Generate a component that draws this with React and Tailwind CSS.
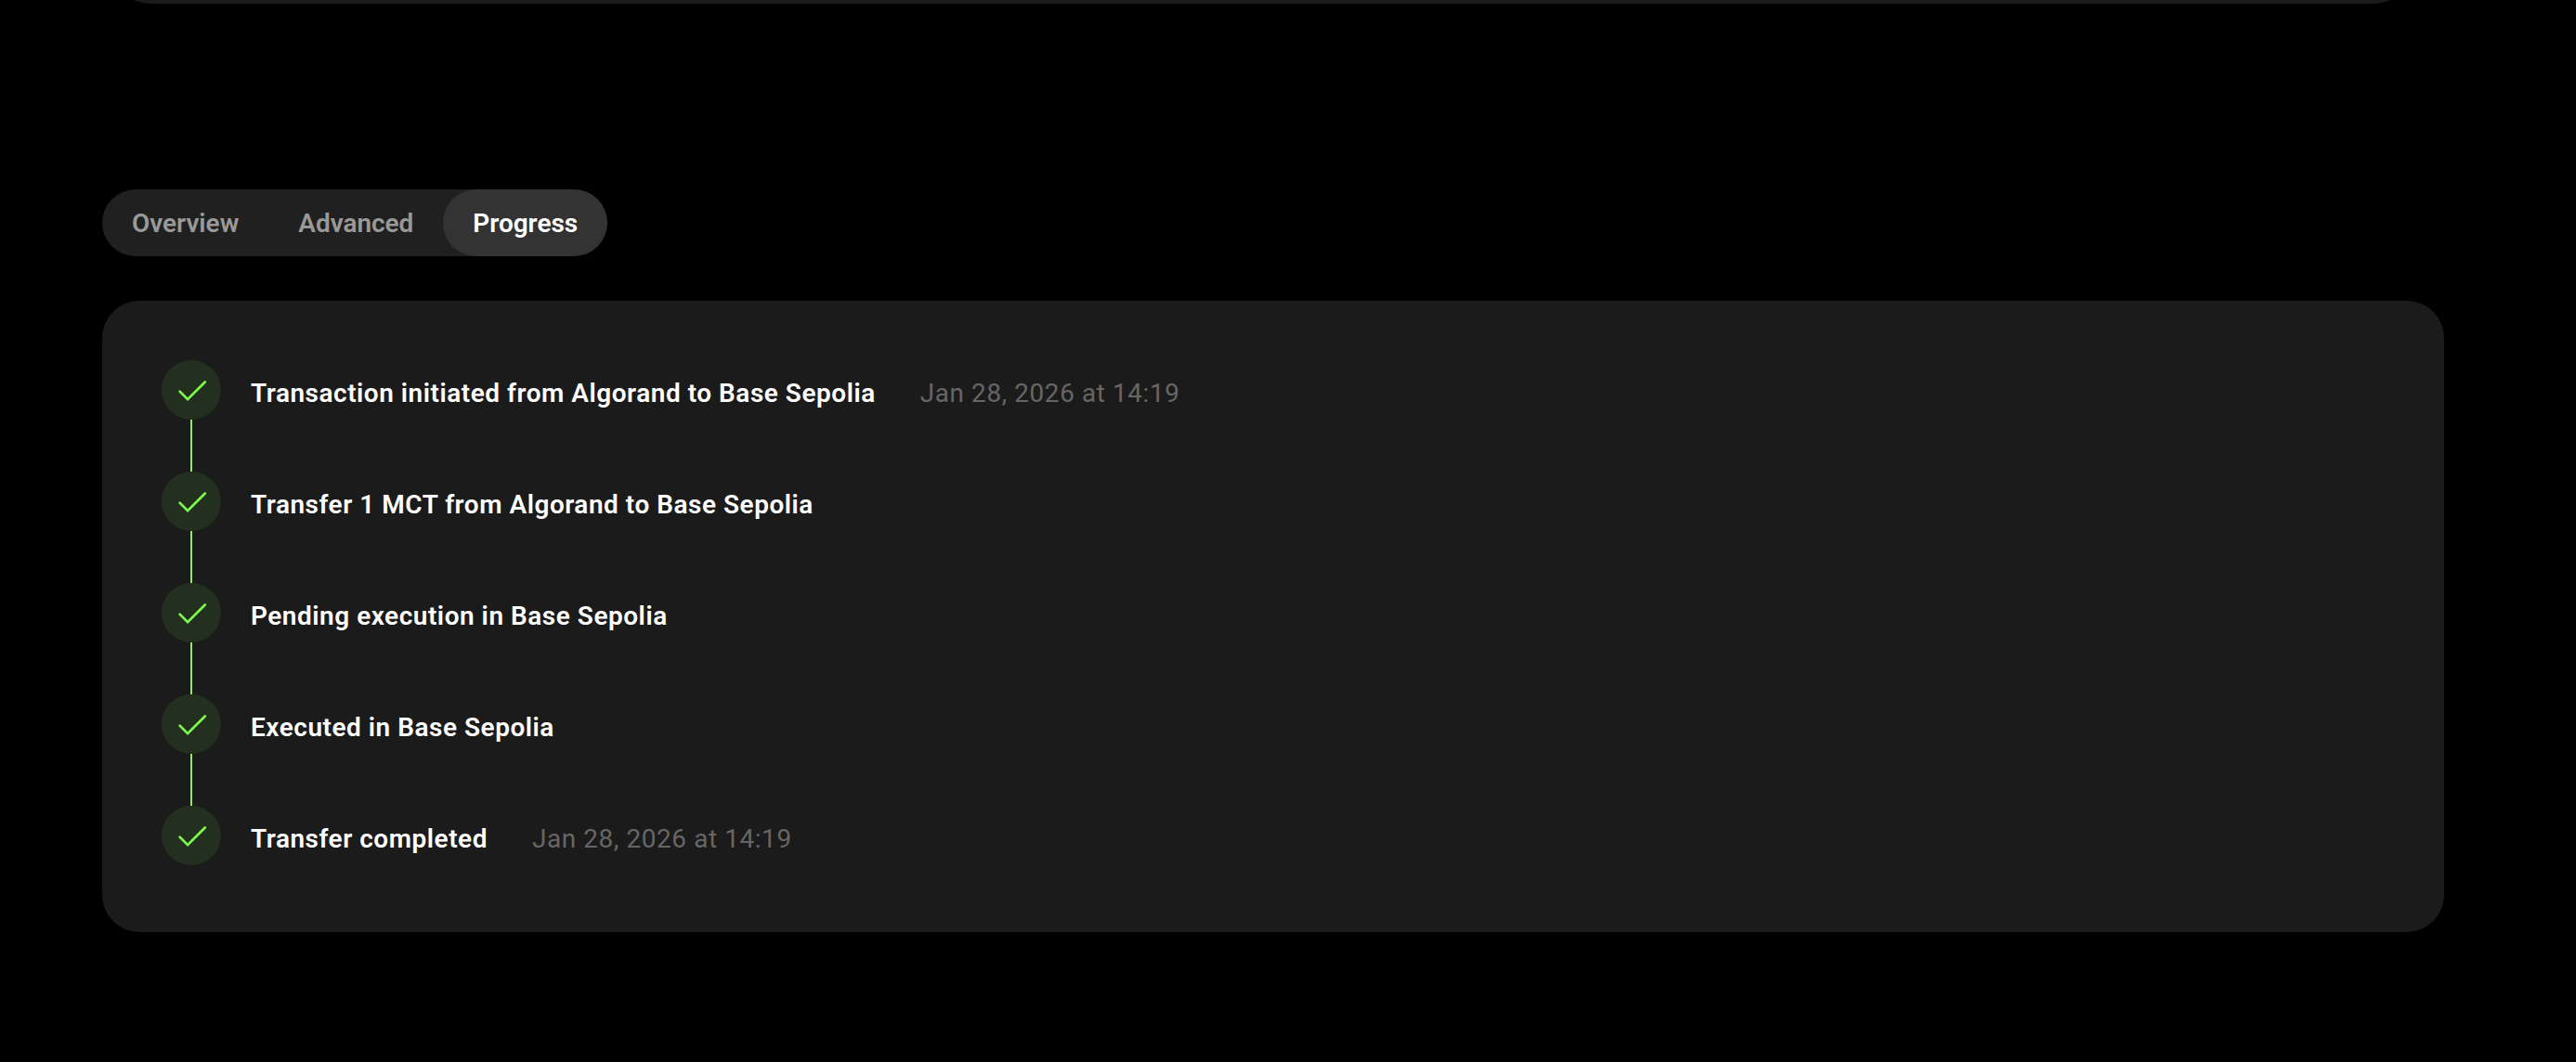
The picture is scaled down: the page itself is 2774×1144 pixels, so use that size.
const tabs = ["Overview", "Advanced", "Progress"];

const steps = [
  { label: "Transaction initiated from Algorand to Base Sepolia", date: "Jan 28, 2026 at 14:19" },
  { label: "Transfer 1 MCT from Algorand to Base Sepolia" },
  { label: "Pending execution in Base Sepolia" },
  { label: "Executed in Base Sepolia" },
  { label: "Transfer completed", date: "Jan 28, 2026 at 14:19" },
];

function CheckIcon() {
  return (
    <svg viewBox="0 0 64 64" className="size-16" fill="none" stroke="#7ffb4b" strokeWidth="2.7" strokeLinecap="round" strokeLinejoin="miter">
      <path d="M19.6 33.6 L28.1 42.2 L46.8 23.5" />
    </svg>
  );
}

function Tabs({ active }) {
  return (
    <div role="tablist" className="flex h-18 w-fit rounded-full bg-[#202020]">
      {tabs.map((tab) => (
        <button
          key={tab}
          role="tab"
          className={
            tab === active
              ? "rounded-full bg-[#333333] px-8 pt-0.5 text-[28px] font-semibold tracking-[-0.04px] text-white"
              : "px-8 pt-0.5 text-[28px] font-semibold tracking-[-0.04px] text-[#999999]"
          }
        >
          {tab}
        </button>
      ))}
    </div>
  );
}

function Step({ label, date, last }) {
  return (
    <li className="flex gap-8">
      <div className="flex flex-col items-center">
        <div className="size-16 rounded-full bg-[#232f1f]">
          <CheckIcon />
        </div>
        {!last && <div className="h-14 w-0.5 bg-[#8fea69]" />}
      </div>
      <div className="flex h-18 items-center gap-12 text-[28px] tracking-[0.51px]">
        <span className="font-semibold text-white">{label}</span>
        {date && <span className="tracking-[0.56px] text-[#666666]">{date}</span>}
      </div>
    </li>
  );
}

export default function App() {
  return (
    <main className="h-[1144px] w-[2774px] overflow-hidden bg-black pr-[142px] pl-[110px] font-[Roboto,sans-serif]">
      <div className="h-1 overflow-hidden">
        <div className="-mt-24 mr-9 ml-3 h-[100px] rounded-[40px] bg-[#1b1b1b]" />
      </div>
      <div className="mt-[200px]">
        <Tabs active="Progress" />
      </div>
      <section className="mt-12 h-[680px] rounded-[40px] bg-[#1b1b1b] p-16">
        <ol className="flex flex-col">
          {steps.map((step, i) => (
            <Step key={step.label} {...step} last={i === steps.length - 1} />
          ))}
        </ol>
      </section>
    </main>
  );
}
